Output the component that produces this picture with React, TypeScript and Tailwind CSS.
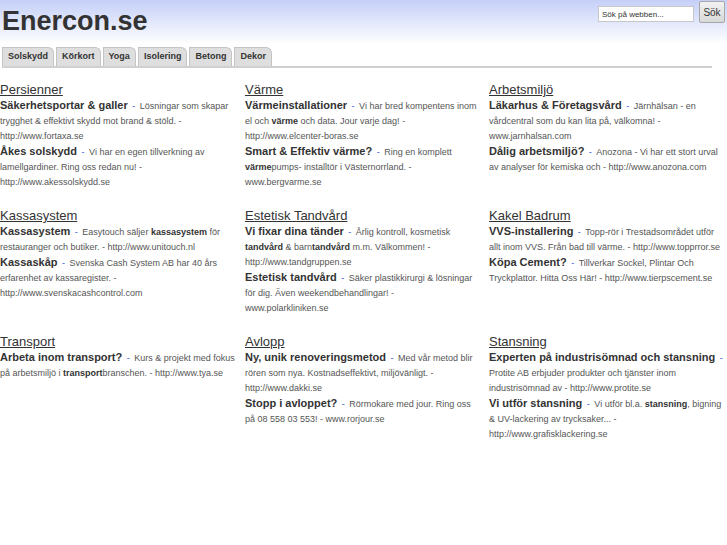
import React from 'react';

type Ad = { title: string; desc: React.ReactNode; url: string };
type Section = { heading: string; ads: Ad[] };

const sections: Section[] = [
  {
    heading: 'Persienner',
    ads: [
      { title: 'Säkerhetsportar & galler', desc: 'Lösningar som skapar trygghet & effektivt skydd mot brand & stöld.', url: 'http://www.fortaxa.se' },
      { title: 'Åkes solskydd', desc: 'Vi har en egen tillverkning av lamellgardiner. Ring oss redan nu!', url: 'http://www.akessolskydd.se' },
    ],
  },
  {
    heading: 'Värme',
    ads: [
      { title: 'Värmeinstallationer', desc: <>Vi har bred kompentens inom el och <b className="text-[#333]">värme</b> och data. Jour varje dag!</>, url: 'http://www.elcenter-boras.se' },
      { title: 'Smart & Effektiv värme?', desc: <>Ring en komplett <b className="text-[#333]">värme</b>pumps- installtör i Västernorrland.</>, url: 'www.bergvarme.se' },
    ],
  },
  {
    heading: 'Arbetsmiljö',
    ads: [
      { title: 'Läkarhus & Företagsvård', desc: 'Järnhälsan - en vårdcentral som du kan lita på, välkomna!', url: 'www.jarnhalsan.com' },
      { title: 'Dålig arbetsmiljö?', desc: 'Anozona - Vi har ett stort urval av analyser för kemiska och', url: 'http://www.anozona.com' },
    ],
  },
  {
    heading: 'Kassasystem',
    ads: [
      { title: 'Kassasystem', desc: <>Easytouch säljer <b className="text-[#333]">kassasystem</b> för restauranger och butiker.</>, url: 'http://www.unitouch.nl' },
      { title: 'Kassaskåp', desc: 'Svenska Cash System AB har 40 års erfarenhet av kassaregister.', url: 'http://www.svenskacashcontrol.com' },
    ],
  },
  {
    heading: 'Estetisk Tandvård',
    ads: [
      { title: 'Vi fixar dina tänder', desc: <>Årlig kontroll, kosmetisk <b className="text-[#333]">tandvård</b> & barn<b className="text-[#333]">tandvård</b> m.m. Välkommen!</>, url: 'http://www.tandgruppen.se' },
      { title: 'Estetisk tandvård', desc: 'Säker plastikkirurgi & lösningar för dig. Även weekendbehandlingar!', url: 'www.polarkliniken.se' },
    ],
  },
  {
    heading: 'Kakel Badrum',
    ads: [
      { title: 'VVS-installering', desc: 'Topp-rör i Trestadsområdet utför allt inom VVS. Från bad till värme.', url: 'http://www.topprror.se' },
      { title: 'Köpa Cement?', desc: 'Tillverkar Sockel, Plintar Och Tryckplattor. Hitta Oss Här!', url: 'http://www.tierpscement.se' },
    ],
  },
  {
    heading: 'Transport',
    ads: [
      { title: 'Arbeta inom transport?', desc: <>Kurs & projekt med fokus på arbetsmiljö i <b className="text-[#333]">transport</b>branschen.</>, url: 'http://www.tya.se' },
    ],
  },
  {
    heading: 'Avlopp',
    ads: [
      { title: 'Ny, unik renoveringsmetod', desc: 'Med vår metod blir rören som nya. Kostnadseffektivt, miljövänligt.', url: 'http://www.dakki.se' },
      { title: 'Stopp i avloppet?', desc: 'Rörmokare med jour. Ring oss på 08 558 03 553!', url: 'www.rorjour.se' },
    ],
  },
  {
    heading: 'Stansning',
    ads: [
      { title: 'Experten på industrisömnad och stansning', desc: 'Protite AB erbjuder produkter och tjänster inom industrisömnad av', url: 'http://www.protite.se' },
      { title: 'Vi utför stansning', desc: <>Vi utför bl.a. <b className="text-[#333]">stansning</b>, bigning & UV-lackering av trycksaker...</>, url: 'http://www.grafisklackering.se' },
    ],
  },
];

const tabs = ['Solskydd', 'Körkort', 'Yoga', 'Isolering', 'Betong', 'Dekor'];

export default function App() {
  return (
    <div className="min-h-screen bg-white font-['Liberation_Sans',Arial,sans-serif] text-[#333]">
      {/* header */}
      <header className="h-[44px] bg-linear-to-b from-[#c5cff7] to-white flex justify-between items-start">
        <h1 className="pl-[2px] pt-[6px] text-[27px] font-bold leading-[30px] text-[#333]">Enercon.se</h1>
        <div className="flex items-start gap-[5px] pt-[1px] pr-[2px]">
          <input
            className="mt-[5px] w-[96px] h-[16px] border border-[#c8c8c8] bg-white px-[3px] text-[8px] text-[#333] placeholder:text-[#333] outline-none"
            placeholder="Sök på webben..."
          />
          <button className="w-[26px] h-[22px] rounded-[2px] border border-[#a8a8a8] bg-linear-to-b from-[#f2f2f2] to-[#d8d8d8] text-[10px] text-[#333]">
            Sök
          </button>
        </div>
      </header>

      {/* tabs */}
      <nav className="mt-[3px] ml-[2px] mr-[15px] flex gap-[2px] border-b-2 border-[#d0d0d0]">
        {tabs.map((t) => (
          <div
            key={t}
            className="h-[19px] px-[5px] flex items-center bg-[#dedede] border border-b-0 border-[#c4c4c4] rounded-tr-[6px] text-[9px] font-bold text-[#333]"
          >
            {t}
          </div>
        ))}
      </nav>

      {/* content */}
      <main className="pt-[14px] grid grid-cols-[240px_239px_1fr] gap-x-[5px] gap-y-[18px]">
        {sections.map((s, i) => (
          <section key={s.heading} className={i % 3 === 1 ? 'pr-[7px]' : ''}>
            <h2 className="text-[13px] leading-[16px] underline text-[#333]">{s.heading}</h2>
            {s.ads.map((a) => (
              <p key={a.title} className="text-[9px] leading-[15px] text-[#555]">
                <b className="text-[11px] text-[#333]">{a.title}</b>
                <span className="text-[#3050e0] [word-spacing:2px]"> - </span>
                {a.desc} - <span className="whitespace-nowrap">{a.url}</span>
              </p>
            ))}
          </section>
        ))}
      </main>
    </div>
  );
}
